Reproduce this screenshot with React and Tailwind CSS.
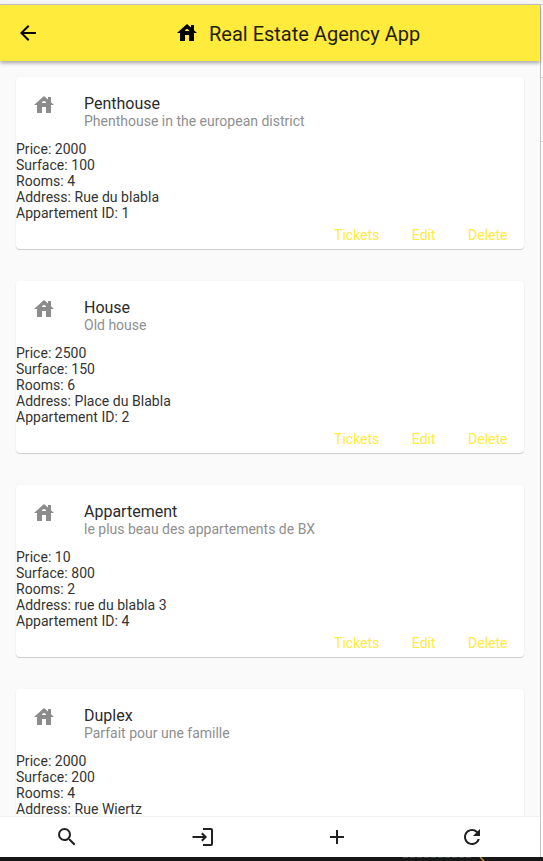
import React from "react";
import { MdArrowBack, MdHouse, MdSearch, MdAdd, MdRefresh } from "react-icons/md";

const listings = [
  { name: "Penthouse", description: "Phenthouse in the european district", price: 2000, surface: 100, rooms: 4, address: "Rue du blabla", id: 1 },
  { name: "House", description: "Old house", price: 2500, surface: 150, rooms: 6, address: "Place du Blabla", id: 2 },
  { name: "Appartement", description: "le plus beau des appartements de BX", price: 10, surface: 800, rooms: 2, address: "rue du blabla 3", id: 4 },
  { name: "Duplex", description: "Parfait pour une famille", price: 2000, surface: 200, rooms: 4, address: "Rue Wiertz" },
];

function EnterIcon() {
  return (
    <svg className="size-6" viewBox="0 0 24 24" fill="none" stroke="currentColor" strokeWidth="2">
      <path d="M2.5 12h13M11.8 8.2l3.8 3.8-3.8 3.8" />
      <path d="M13 4h8a1 1 0 0 1 1 1v14a1 1 0 0 1-1 1h-8" />
    </svg>
  );
}

function ListingCard({ item }) {
  return (
    <article className="h-[172px] shrink-0 rounded bg-white shadow-[0_1px_1px_rgba(0,0,0,0.18),0_0_2px_rgba(0,0,0,0.04)]">
      <header className="flex h-16 pl-4 pt-4">
        <MdHouse className="size-6 shrink-0 text-[#8c8c8c]" />
        <div className="ml-7">
          <h2 className="mt-px h-[19px] text-base leading-[19px] text-[#2b2b2b]">{item.name}</h2>
          <p className="text-sm leading-4 text-[#8f8f8f]">{item.description}</p>
        </div>
      </header>
      <div className="text-sm leading-4 tracking-[0.03px] text-[#333333]">
        <p>Price: {item.price}</p>
        <p>Surface: {item.surface}</p>
        <p>Rooms: {item.rooms}</p>
        <p>Address: {item.address}</p>
        {item.id && <p>Appartement ID: {item.id}</p>}
      </div>
      {item.id && (
        <div className="mt-1.5 flex justify-end gap-[32.5px] pr-[16.5px] text-sm leading-4 text-[#ffeb3b]">
          <button>Tickets</button>
          <button>Edit</button>
          <button>Delete</button>
        </div>
      )}
    </article>
  );
}

export default function App() {
  return (
    <div className="flex h-[861px] w-[543px] flex-col overflow-hidden bg-white font-['Roboto',sans-serif]">
      <div className="h-[5px] shrink-0 border-b border-[#c4c4c4] bg-[#f5f5f5]" />
      <div className="flex h-[852px] shrink-0">
        <div className="flex w-[540px] flex-col bg-[#fafafa]">
          <header className="z-10 flex h-14 shrink-0 items-center bg-[#ffeb3b] pl-4 shadow-[0_2px_4px_rgba(0,0,0,0.35)]">
            <MdArrowBack className="size-6 text-black" />
            <div className="ml-[135px] flex items-center">
              <MdHouse className="size-6 text-black" />
              <h1 className="ml-[10px] mt-0.5 text-xl leading-6 text-[#1f1c07]">Real Estate Agency App</h1>
            </div>
          </header>
          <main className="flex min-h-0 flex-1 flex-col gap-8 overflow-hidden px-4 pt-4">
            {listings.map((item) => <ListingCard key={item.name} item={item} />)}
          </main>
          <nav className="z-10 grid h-[41px] shrink-0 grid-cols-4 place-items-center border-t border-[#f0f0f0] bg-white pb-px pr-px text-[#212121]">
            <MdSearch className="size-6" />
            <EnterIcon />
            <MdAdd className="size-6" />
            <MdRefresh className="size-6" />
          </nav>
        </div>
        <div className="w-[3px] border-l border-[#c4c4c4]">
          <div className="mt-[72px] h-[65px] border-y border-[#d6d6d6] bg-[#fafafa]" />
        </div>
      </div>
      <div className="flex flex-1 justify-end bg-[#171717]">
        <svg className="h-1 w-[150px]" viewBox="0 0 150 4">
          <path d="M10 0.5H78" stroke="#3d4540" strokeWidth="1" strokeDasharray="5 2" />
          <path d="M87 0l4 4" stroke="#b98b2c" strokeWidth="1.5" />
        </svg>
      </div>
    </div>
  );
}
